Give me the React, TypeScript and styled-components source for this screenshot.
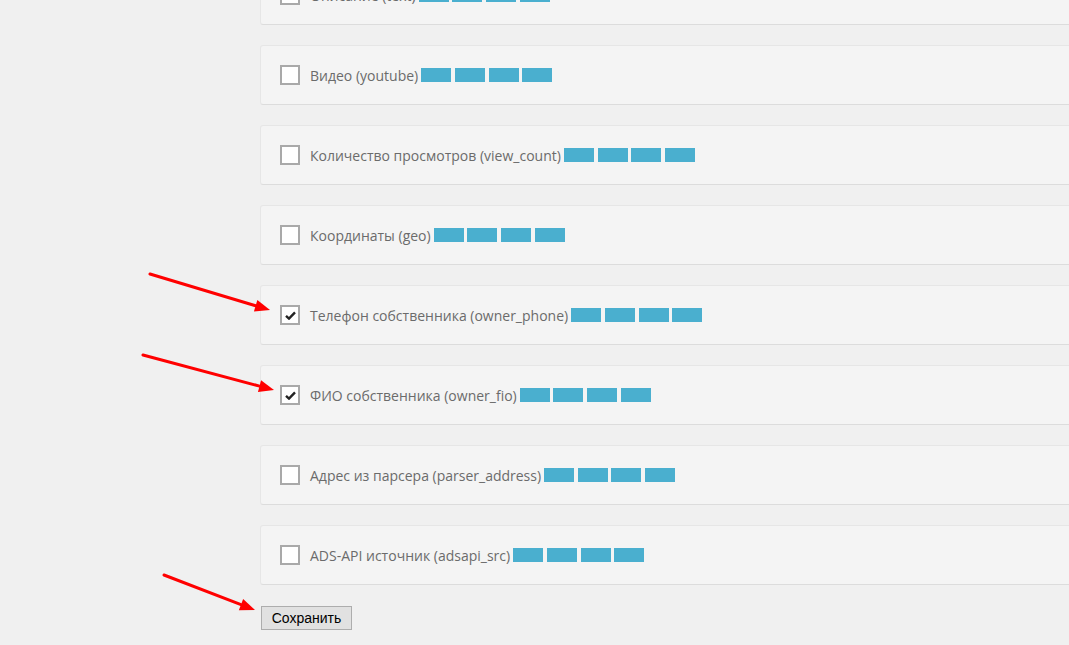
import React from 'react'
import styled, { createGlobalStyle } from 'styled-components'

const GlobalStyle = createGlobalStyle`
  html, body {
    margin: 0;
    padding: 0;
    background: #f0f0f0;
    overflow: hidden;
  }
`

const Page = styled.div`
  position: relative;
  width: 1069px;
  height: 645px;
  overflow: hidden;
  background: #f0f0f0;
`

const Fields = styled.div`
  display: flex;
  flex-direction: column;
  gap: 20px;
  width: 1000px;
  margin: -35px 0 0 260px;
`

const Card = styled.label`
  display: flex;
  align-items: center;
  box-sizing: border-box;
  height: 60px;
  padding: 0 19px;
  background: #f4f4f4;
  border: 1px solid #e6e6e6;
  border-bottom-color: #dcdcdc;
  border-radius: 3px;
  font-family: 'Open Sans', 'Noto Sans', sans-serif;
  font-size: 14px;
  color: #6b6b6b;
`

const Box = styled.span`
  box-sizing: border-box;
  width: 20px;
  height: 20px;
  flex: none;
  display: flex;
  align-items: center;
  justify-content: center;
  background: #fff;
  border: 2px solid #a9a9a9;
  margin-right: 10px;
`

const Name = styled.span`
  white-space: nowrap;
`

const Redacted = styled.span`
  display: flex;
  gap: 3.7px;
  margin-left: 3px;
`

const Bar = styled.span`
  width: 30px;
  height: 14px;
  background: #4aafcf;
`

const SaveButton = styled.button`
  margin: 21px 0 0 261px;
  width: 91px;
  height: 24px;
  padding: 0;
  background: #e1e1e1;
  border: 1px solid #adadad;
  border-radius: 0;
  font-family: 'Liberation Sans', Arial, sans-serif;
  font-size: 14px;
  color: #000;
`

const Overlay = styled.svg`
  position: absolute;
  left: 0;
  top: 0;
  pointer-events: none;
`

const fields = [
  { name: 'Описание (text)', checked: false },
  { name: 'Видео (youtube)', checked: false },
  { name: 'Количество просмотров (view_count)', checked: false },
  { name: 'Координаты (geo)', checked: false },
  { name: 'Телефон собственника (owner_phone)', checked: true },
  { name: 'ФИО собственника (owner_fio)', checked: true },
  { name: 'Адрес из парсера (parser_address)', checked: false },
  { name: 'ADS-API источник (adsapi_src)', checked: false },
]

const arrows = [
  [150, 274, 270, 310],
  [143, 355, 274, 390],
  [164, 575, 255, 610],
]

const Arrow = ({ x1, y1, x2, y2 }: { x1: number; y1: number; x2: number; y2: number }) => {
  const a = Math.atan2(y2 - y1, x2 - x1)
  const len = 15
  const w = 6
  const bx = x2 - len * Math.cos(a)
  const by = y2 - len * Math.sin(a)
  const px = -Math.sin(a) * w
  const py = Math.cos(a) * w
  return (
    <g>
      <line x1={x1} y1={y1} x2={bx} y2={by} stroke="#f00" strokeWidth={3} strokeLinecap="round" />
      <polygon points={`${x2},${y2} ${bx + px},${by + py} ${bx - px},${by - py}`} fill="#f00" />
    </g>
  )
}

const App = () => (
  <Page>
    <GlobalStyle />
    <Fields>
      {fields.map((f) => (
        <Card key={f.name}>
          <Box>
            {f.checked && (
              <svg width="11" height="9" viewBox="0 0 11 9">
                <path d="M1 4.8 L4 7.6 L10 1.4" fill="none" stroke="#222" strokeWidth="2.4" />
              </svg>
            )}
          </Box>
          <Name>{f.name}</Name>
          <Redacted>
            <Bar />
            <Bar />
            <Bar />
            <Bar />
          </Redacted>
        </Card>
      ))}
    </Fields>
    <SaveButton>Сохранить</SaveButton>
    <Overlay width="1069" height="645">
      {arrows.map(([x1, y1, x2, y2], i) => (
        <Arrow key={i} x1={x1} y1={y1} x2={x2} y2={y2} />
      ))}
    </Overlay>
  </Page>
)

export default App
